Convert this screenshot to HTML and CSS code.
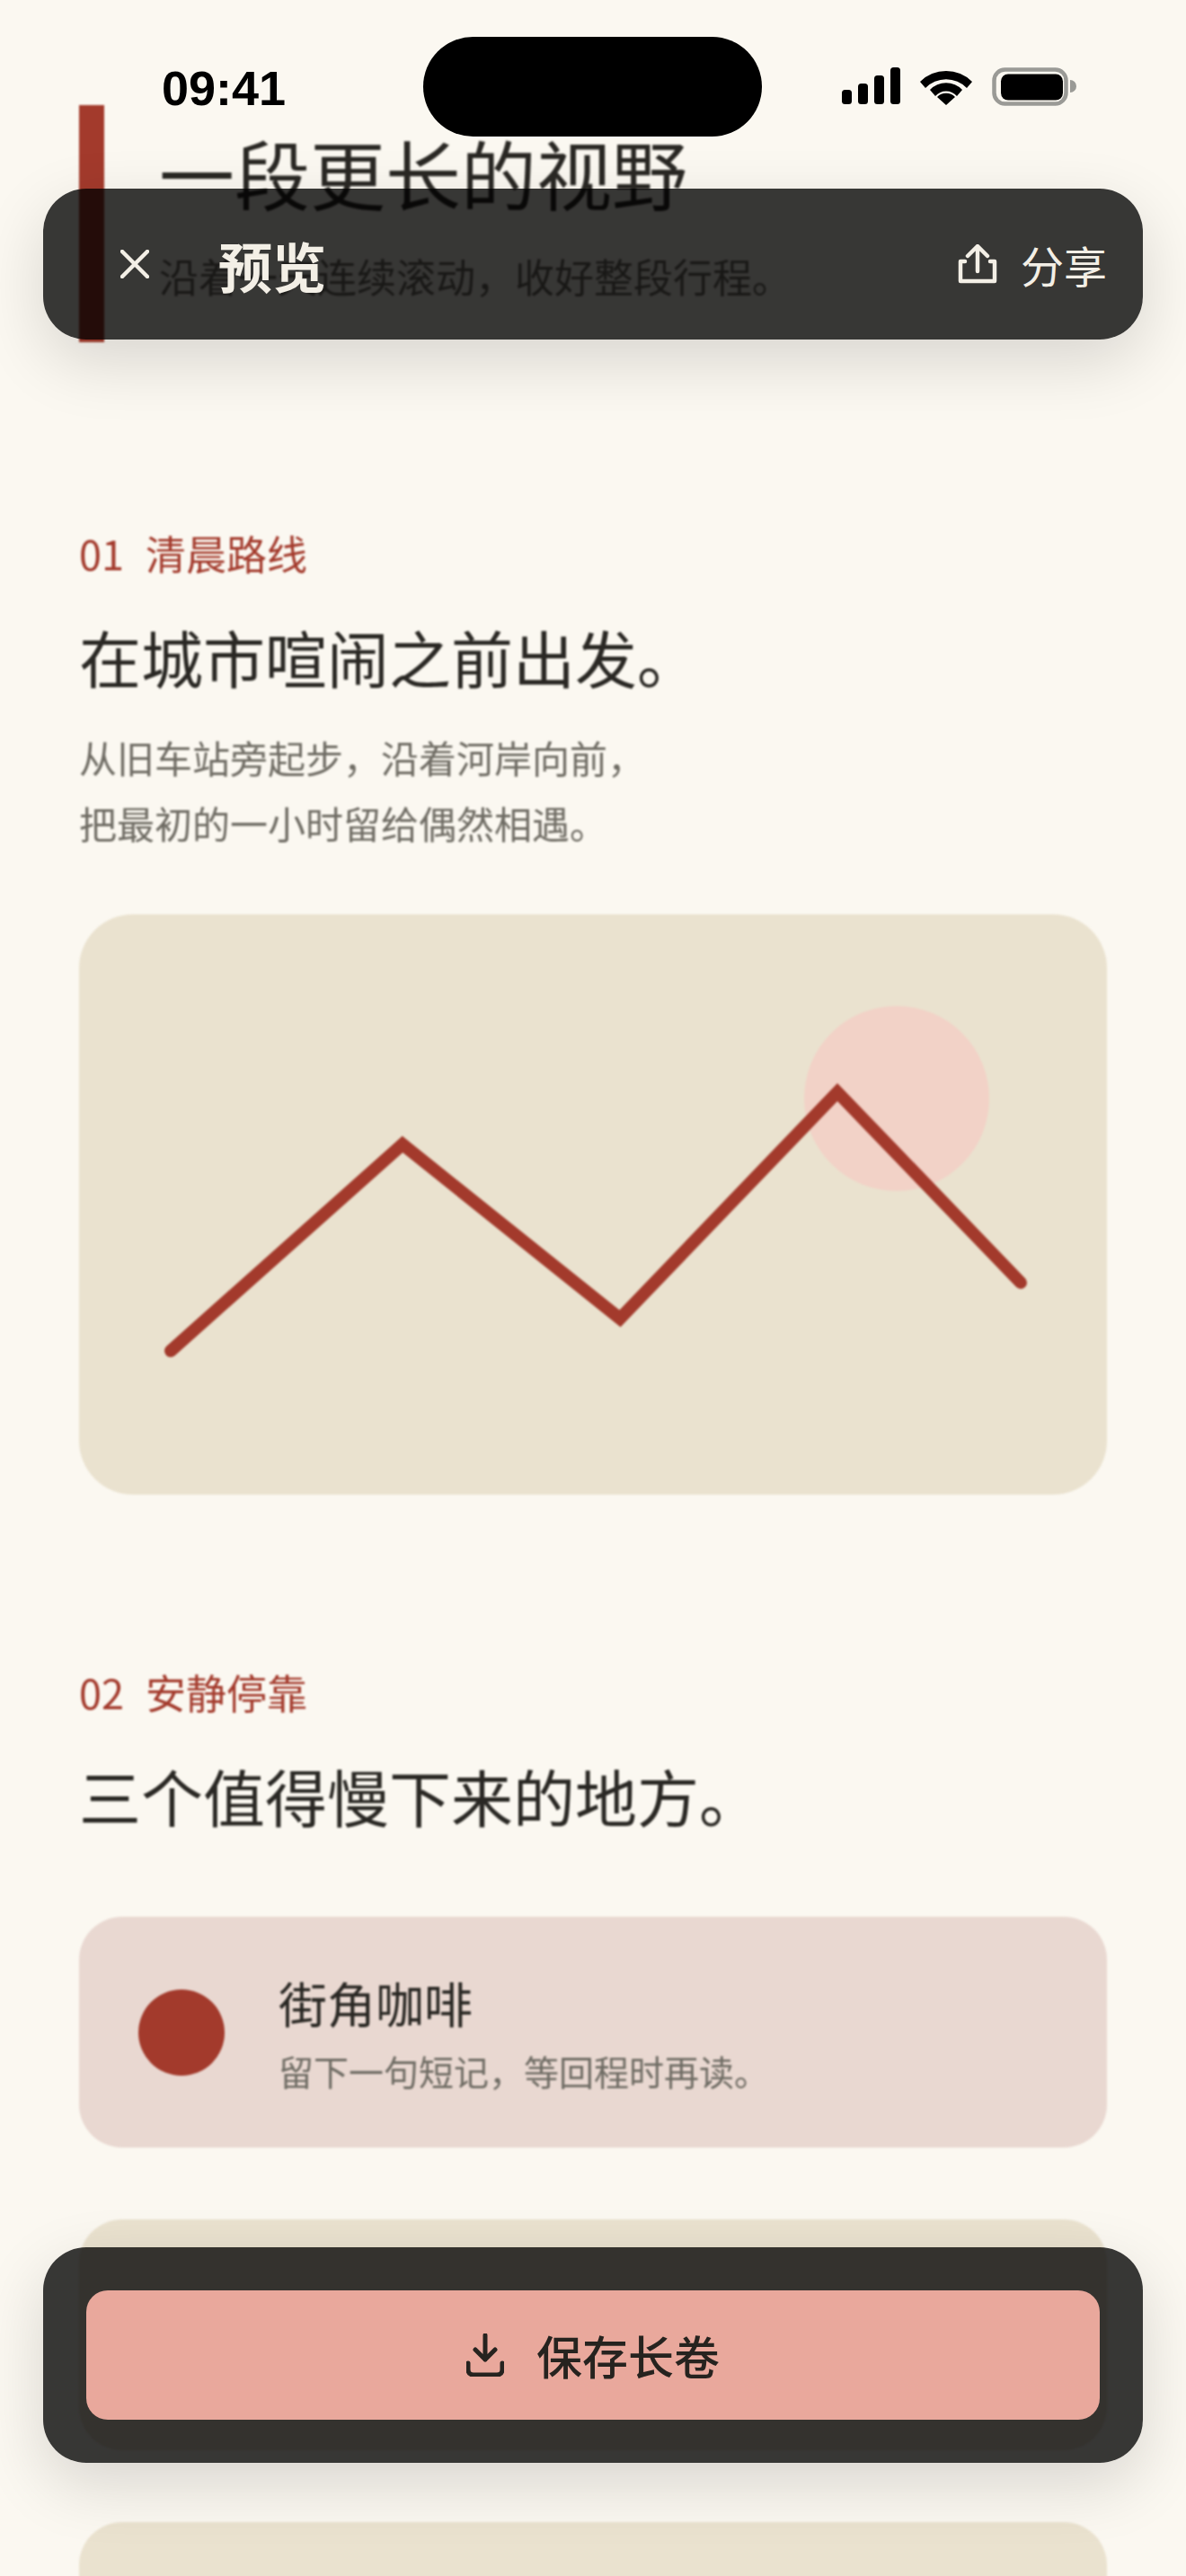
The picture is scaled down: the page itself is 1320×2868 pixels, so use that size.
FILE: index.html
```html
<!DOCTYPE html>
<html lang="zh-CN">
<head>
    <meta charset="UTF-8">
    <title>预览</title>
    <link rel="stylesheet" href="styles.css">
</head>
<body>
    <div class="phone">
        <div class="page">
            <section class="hero">
                <div class="hero-bar"></div>
                <div class="hero-text">
                    <h1>一段更长的视野</h1>
                    <p>沿着一天连续滚动，收好整段行程。</p>
                </div>
            </section>

            <section class="route">
                <div class="label"><span>01</span><span>清晨路线</span></div>
                <h2>在城市喧闹之前出发。</h2>
                <p class="body-text">从旧车站旁起步，沿着河岸向前，<br>把最初的一小时留给偶然相遇。</p>
                <div class="map-card">
                    <svg class="map" viewBox="0 0 1144 646">
                        <circle cx="910" cy="205" r="103" fill="#f2d2c7"/>
                        <polyline points="102,486 360,256 602,450 844,198 1048,410" fill="none" stroke="#a33a2c" stroke-width="14" stroke-linecap="round"/>
                    </svg>
                </div>
            </section>

            <section class="stops">
                <div class="label"><span>02</span><span>安静停靠</span></div>
                <h2>三个值得慢下来的地方。</h2>
                <div class="stop-list">
                    <div class="stop stop-pink">
                        <div class="stop-dot"></div>
                        <div>
                            <h3>街角咖啡</h3>
                            <p>留下一句短记，等回程时再读。</p>
                        </div>
                    </div>
                    <div class="stop stop-sand"></div>
                    <div class="stop stop-sand"></div>
                </div>
            </section>
        </div>

        <div class="status-bar">
            <span class="time">09:41</span>
            <div class="island"></div>
            <div class="status-icons">
                <svg width="66" height="42" viewBox="0 0 66 42">
                    <rect x="1" y="25" width="11" height="16" rx="3.5"/>
                    <rect x="19" y="18" width="11" height="23" rx="3.5"/>
                    <rect x="37" y="9" width="11" height="32" rx="3.5"/>
                    <rect x="55" y="0" width="11" height="41" rx="3.5"/>
                </svg>
                <svg width="58" height="42" viewBox="0 0 58 42">
                    <path d="M0 16 A41 41 0 0 1 58 16 L52 23 A32 32 0 0 0 6 23 Z"/>
                    <path d="M11 28 A25 25 0 0 1 47 28 L41 35 A16 16 0 0 0 17 35 Z" transform="translate(0 -3)"/>
                    <path d="M19 33 A14 14 0 0 1 39 33 L29 42 Z" transform="translate(0 0)"/>
                </svg>
                <svg width="94" height="43" viewBox="0 0 94 43">
                    <rect x="2.5" y="2.5" width="80" height="38" rx="12" fill="none" stroke="#9a9a96" stroke-width="4.5"/>
                    <rect x="10" y="7.5" width="69" height="29" rx="8"/>
                    <path d="M87 14 A7 7 0 0 1 87 28 Z" fill="#9a9a96"/>
                </svg>
            </div>
        </div>

        <header class="top-bar">
            <div class="top-left">
                <svg class="close" width="32" height="32" viewBox="0 0 32 32">
                    <path d="M2 2 L30 30 M30 2 L2 30"/>
                </svg>
                <span class="top-title">预览</span>
            </div>
            <div class="top-right">
                <svg class="share" width="44" height="44" viewBox="0 0 44 44">
                    <path d="M22 30 V3 M11 13 L22 2 L33 13 M8 19 H3 V41 H41 V19 H36"/>
                </svg>
                <span>分享</span>
            </div>
        </header>

        <footer class="bottom-bar">
            <div class="save-button">
                <svg class="download" width="42" height="48" viewBox="0 0 42 48">
                    <path d="M21 2 V29 M10 18 L21 29 L32 18 M2 33 V40 Q2 46 8 46 H34 Q40 46 40 40 V33"/>
                </svg>
                <span>保存长卷</span>
            </div>
        </footer>
    </div>
</body>
</html>
```

FILE: styles.css
```css
body {
    margin: 0;
    background-color: #fbf8f1;
    font-family: "Noto Sans CJK SC", "Liberation Sans", sans-serif;
    color: #2a2824;
}
h1, h2, h3, p {
    margin: 0;
    font-weight: 400;
}
.phone {
    position: relative;
    width: 1320px;
    height: 2868px;
    overflow: hidden;
    background-color: #fbf8f1;
}
.page {
    padding: 117px 88px 0;
    filter: blur(1px);
}
.hero {
    display: flex;
    gap: 61px;
}
.hero-bar {
    width: 28px;
    height: 264px;
    background-color: #a33a2c;
}
.hero-text h1 {
    font-size: 84px;
    line-height: 120px;
    margin-top: 15px;
}
.hero-text p {
    font-size: 44px;
    line-height: 60px;
    color: #6f6c64;
    margin-top: 25px;
}
.route {
    margin-top: 205px;
}
.label {
    display: flex;
    gap: 24px;
    font-size: 45px;
    line-height: 60px;
    color: #a33a2c;
}
h2 {
    font-size: 69px;
    line-height: 90px;
    margin-top: 40px;
}
.body-text {
    font-size: 42px;
    line-height: 73px;
    color: #6f6c64;
    margin-top: 30px;
}
.map-card {
    margin-top: 66px;
    height: 646px;
    border-radius: 60px;
    background-color: #eae2cf;
}
.map {
    display: block;
    width: 100%;
    height: 100%;
}
.stops {
    margin-top: 190px;
}
.stop-list {
    margin-top: 90px;
    display: flex;
    flex-direction: column;
    gap: 80px;
}
.stop {
    height: 257px;
    border-radius: 48px;
    display: flex;
    align-items: center;
    gap: 60px;
    padding-left: 66px;
}
.stop-pink {
    background-color: #e9d8d1;
}
.stop-sand {
    background-color: #eae2cf;
}
.stop-dot {
    width: 96px;
    height: 96px;
    border-radius: 50%;
    background-color: #a33a2c;
}
.stop h3 {
    font-size: 54px;
    line-height: 72px;
}
.stop p {
    font-size: 39px;
    line-height: 54px;
    color: #6f6c64;
    margin-top: 12px;
}
.status-bar {
    position: absolute;
    top: 41px;
    left: 0;
    width: 1320px;
    height: 111px;
}
.time {
    position: absolute;
    left: 180px;
    top: 30px;
    font-family: "Liberation Sans", sans-serif;
    font-size: 54px;
    line-height: 54px;
    font-weight: bold;
    color: #000;
}
.island {
    position: absolute;
    left: 471px;
    top: 0;
    width: 377px;
    height: 111px;
    border-radius: 56px;
    background-color: #000;
}
.status-icons {
    position: absolute;
    left: 936px;
    top: 34px;
    display: flex;
    gap: 22px;
}
.top-bar {
    position: absolute;
    left: 48px;
    top: 210px;
    width: 1224px;
    height: 168px;
    box-sizing: border-box;
    padding: 0 40px 0 86px;
    border-radius: 48px;
    background-color: rgba(0, 0, 0, 0.78);
    box-shadow: 0 24px 72px rgba(0, 0, 0, 0.14);
    display: flex;
    justify-content: space-between;
    align-items: center;
    color: #f3efe6;
}
.top-left, .top-right {
    display: flex;
    align-items: center;
}
.top-left {
    gap: 77px;
}
.top-right {
    gap: 26px;
    font-size: 48px;
}
.top-title {
    font-size: 60px;
    font-weight: bold;
}
.close, .share {
    fill: none;
    stroke: #f3efe6;
    stroke-width: 4.5;
    stroke-linecap: round;
    stroke-linejoin: round;
}
.bottom-bar {
    position: absolute;
    left: 48px;
    top: 2502px;
    width: 1224px;
    height: 240px;
    box-sizing: border-box;
    padding: 48px;
    border-radius: 48px;
    background-color: rgba(0, 0, 0, 0.78);
    box-shadow: 0 24px 72px rgba(0, 0, 0, 0.14);
}
.save-button {
    height: 144px;
    border-radius: 24px;
    background-color: #e9a89c;
    color: #26231f;
    display: flex;
    justify-content: center;
    align-items: center;
    gap: 36px;
    font-size: 51px;
    font-weight: 500;
}
.download {
    fill: none;
    stroke: #26231f;
    stroke-width: 5;
    stroke-linecap: round;
    stroke-linejoin: round;
}
```
